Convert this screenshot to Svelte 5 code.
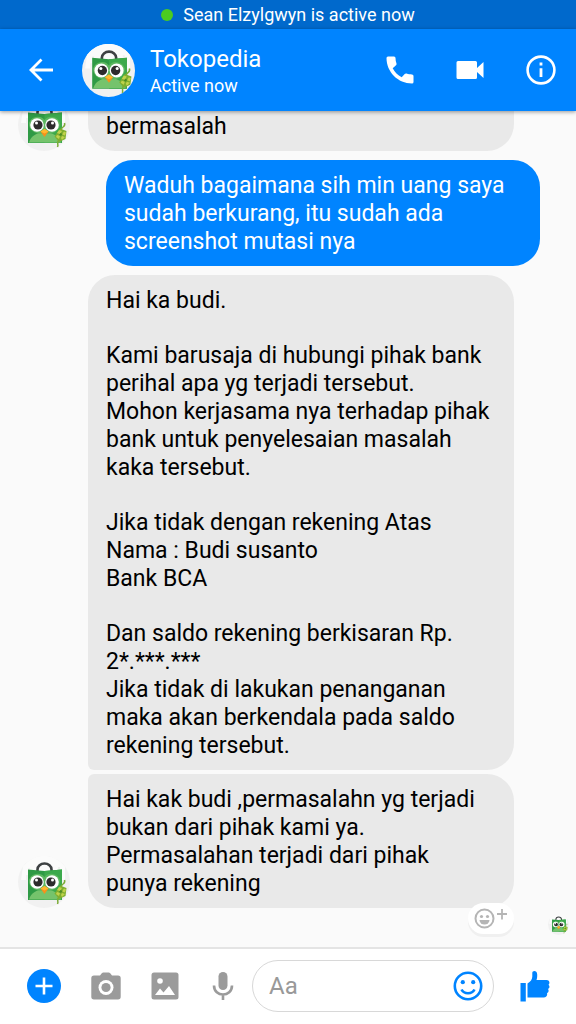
<script>
  const longMessage = [
    "Hai ka budi.",
    "Kami barusaja di hubungi pihak bank\nperihal apa yg terjadi tersebut.\nMohon kerjasama nya terhadap pihak\nbank untuk penyelesaian masalah\nkaka tersebut.",
    "Jika tidak dengan rekening Atas\nNama : Budi susanto\nBank BCA",
    "Dan saldo rekening berkisaran Rp.\n2*.***.***\nJika tidak di lakukan penanganan\nmaka akan berkendala pada saldo\nrekening tersebut."
  ];

  const messages = [
    { from: "shop", shape: "middle", avatar: true, paragraphs: ["bermasalah"] },
    {
      from: "me",
      shape: "single",
      paragraphs: ["Waduh bagaimana sih min uang saya\nsudah berkurang, itu sudah ada\nscreenshot mutasi nya"]
    },
    { from: "shop", shape: "first", paragraphs: longMessage },
    {
      from: "shop",
      shape: "last",
      avatar: true,
      react: true,
      paragraphs: ["Hai kak budi ,permasalahn yg terjadi\nbukan dari pihak kami ya.\nPermasalahan terjadi dari pihak\npunya rekening"]
    }
  ];

  let draft = $state("");
</script>

{#snippet avatar(size)}
  <svg class="avatar" width={size} height={size} viewBox="0 0 52 52" role="img" aria-label="Tokopedia">
    <circle cx="26" cy="26" r="26" fill="#f1f1f1" />
    <path d="M5 10.500A26 26 0 0 1 47 10.500V24h-3v-8h-2v-5h-2v10H12v-9h-2v7H8v5H3z" fill="#fbfbfb" />
    <path d="M19.500 15v-1.500a7 6 0 0 1 14 0V15" fill="none" stroke="#3e4143" stroke-width="2.600" />
    <path d="M10 13.500l16.500 1.500L44 13.500V44H10z" fill="#2f9a45" />
    <path d="M26.500 15L44 13.500V44H26.500z" fill="#3ca94c" />
    <path d="M11 43.500c2-7 8-10 15.500-10S41 36.500 43 43.500z" fill="#75c36c" />
    <path d="M11 24a9 9 0 0 1 15.500-3A9 9 0 0 1 42 24c.500 8-8 12-15.500 10.500C19 36 10.500 32 11 24z" fill="#5db760" />
    <circle cx="19" cy="26" r="6.800" fill="#fff" />
    <circle cx="34" cy="26" r="6.800" fill="#fff" />
    <circle cx="20" cy="26" r="4.600" fill="#2d2b2c" />
    <circle cx="33" cy="26" r="4.600" fill="#2d2b2c" />
    <circle cx="18.500" cy="24" r="1.500" fill="#fff" />
    <circle cx="34.500" cy="24" r="1.500" fill="#fff" />
    <path d="M26.500 30l4 2.500-4 5.500-4-5.500z" fill="#f6901b" />
    <path d="M26.500 30l4 2.500-4 2-4-2z" fill="#ffb92e" />
    <path d="M43 31c1-4 5-3 3.500-7M41 41c-3 3 0 4-1.500 7" fill="none" stroke="#7bab35" stroke-width="1.500" />
    <path d="M42 29.500l6.500 2.500-1 8-6.500 3-4.500-5.500z" fill="#7fae2f" />
    <path d="M41 31l3 1-2 3-3-1zM46 32.500l2 1-1 3-3-1zM39 36l3 1-1 3-3-2zM44 37l3 1-3 3-1-2z" fill="#c0d24c" />
    <path d="M42.500 34l2 1-1.500 2-2-1z" fill="#4c8a24" />
  </svg>
{/snippet}

<div class="screen">
  <div class="presence"><span class="dot"></span>Sean Elzylgwyn is active now</div>

  <header>
    <button class="back" aria-label="Back">
      <svg width="24" height="24" viewBox="0 0 24 24" fill="none" stroke="currentColor" stroke-width="2.800">
        <path d="M12.500 1.500L2 12l10.500 10.500M2 12h22" />
      </svg>
    </button>
    {@render avatar(53)}
    <div class="who">
      <h1>Tokopedia</h1>
      <p>Active now</p>
    </div>
    <nav>
      <button aria-label="Call">
        <svg width="28" height="28" viewBox="0 0 28 28" fill="currentColor">
          <path d="M2 .500h6q1.500 0 1.500 1.500 0 3 1 5.500.300 1-.500 1.800L6.700 12.300c2 4 5 7 9 9l3-3.200q.800-.800 1.800-.500c2 .700 3.500.900 5.500.900q1.500 0 1.500 1.500V26q0 1.500-1.500 1.500C12 27.500.500 16 .500 2Q.500.500 2 .500z" />
        </svg>
      </button>
      <button aria-label="Video call">
        <svg width="28" height="20" viewBox="0 0 28 20" fill="currentColor">
          <path d="M2 1h17.500Q21 1 21 2.500V8l6.500-6v16L21 12v5.500q0 1.500-1.500 1.500H2Q.500 19 .500 17.500v-15Q.500 1 2 1z" />
        </svg>
      </button>
      <button aria-label="Conversation info">
        <svg width="30" height="30" viewBox="0 0 30 30" fill="none" stroke="currentColor">
          <circle cx="15" cy="15" r="13.400" stroke-width="2.600" />
          <path d="M15 7.500v3M15 13.300V22" stroke-width="2.800" />
        </svg>
      </button>
    </nav>
  </header>

  <main>
    {#each messages as message}
      <div class="row {message.from} {message.shape}">
        {#if message.from === "shop"}
          <div class="side">
            {#if message.avatar}{@render avatar(52)}{/if}
          </div>
        {/if}
        <div class="bubble">
          {#each message.paragraphs as text}
            <p>{text}</p>
          {/each}
          {#if message.react}
            <button class="react" aria-label="Add reaction">
              <svg width="34" height="22" viewBox="0 0 34 22" fill="none" stroke="#b5b5b5">
                <circle cx="10.500" cy="11.500" r="9" stroke-width="2" />
                <circle cx="7.500" cy="9.500" r="1.600" fill="#b5b5b5" stroke="none" />
                <circle cx="13.500" cy="9.500" r="1.600" fill="#b5b5b5" stroke="none" />
                <path d="M5.500 13h10a5 4.500 0 0 1-10 0z" fill="#b5b5b5" stroke="none" />
                <path d="M28 2v10.500M23 7h10" stroke-width="1.800" />
              </svg>
            </button>
          {/if}
        </div>
      </div>
    {/each}
    <div class="seen">{@render avatar(21)}</div>
  </main>

  <footer>
    <div class="tools">
      <button aria-label="More">
        <svg width="34" height="34" viewBox="0 0 34 34">
          <circle cx="17" cy="17" r="17" fill="#0084ff" />
          <path d="M17 8.500v17M8.500 17h17" stroke="#fff" stroke-width="2.600" />
        </svg>
      </button>
      <button aria-label="Camera">
        <svg width="30" height="28" viewBox="0 0 30 28" fill="#9b9b9b">
          <path d="M3 3.500h6L11 1q.500-.500 1.300-.500h5.400q.800 0 1.300.500l2 2.500h6q2.700 0 2.700 2.700v18.600q0 2.700-2.700 2.700H3q-2.700 0-2.700-2.700V6.200Q.300 3.500 3 3.500z" />
          <circle cx="15" cy="15.500" r="7.500" fill="#fff" />
          <circle cx="15" cy="15.500" r="4.600" />
        </svg>
      </button>
      <button aria-label="Gallery">
        <svg width="28" height="28" viewBox="0 0 28 28">
          <rect x=".500" y=".500" width="27" height="27" rx="2.500" fill="#9b9b9b" />
          <circle cx="9" cy="9" r="2.800" fill="#fff" />
          <path d="M4 23l5-6.500 3.500 4 5.500-6.500 6 9z" fill="#fff" />
        </svg>
      </button>
      <button aria-label="Record voice">
        <svg width="28" height="30" viewBox="-3 0 28 30">
          <rect x="6.500" y="1" width="9" height="18" rx="4.500" fill="#9b9b9b" />
          <path d="M2 14.500c0 12 18 12 18 0M11 23v6" fill="none" stroke="#9b9b9b" stroke-width="2.600" />
        </svg>
      </button>
    </div>
    <div class="field">
      <input type="text" bind:value={draft} placeholder="Aa" aria-label="Message" />
      <button aria-label="Emoji">
        <svg width="30" height="30" viewBox="0 0 30 30" fill="none" stroke="#0084ff" stroke-width="2.600">
          <circle cx="15" cy="15" r="13.200" />
          <circle cx="9.800" cy="11.200" r="2.100" fill="#0084ff" stroke="none" />
          <circle cx="20.200" cy="11.200" r="2.100" fill="#0084ff" stroke="none" />
          <path d="M8.500 18.500c2.500 5 10.500 5 13 0" />
        </svg>
      </button>
    </div>
    <button class="like" aria-label="Send like">
      <svg width="30" height="32" viewBox="0 0 30 32" fill="#0084ff">
        <path d="M.500 13h5.300v18.500H.500z" />
        <path d="M7.500 13.500c3-2 4.800-4 4.800-7V3c0-2.500 4.700-3 4.900 1.500.100 2.500-.200 4-.700 5.500h10c3 0 3.800 3.200 2 4.700 1.500 1.300 1.200 3.300-.500 4.300 1.200 1.600.500 3.400-1 4.100.700 2-.700 4.400-3.300 4.400H7.500z" />
      </svg>
    </button>
  </footer>
</div>

<style>
  :global(body) { margin: 0; }

  .screen {
    display: flex;
    flex-direction: column;
    height: 100vh;
    background: #fafafa;
    color: #000;
    font-family: Roboto, sans-serif;
  }

  h1, p { margin: 0; font-weight: 400; }

  button {
    display: flex;
    padding: 0;
    border: none;
    background: none;
    color: inherit;
    cursor: pointer;
  }

  .avatar { display: block; flex: none; }

  .presence {
    display: flex;
    align-items: center;
    justify-content: center;
    gap: 10px;
    height: 29px;
    background: #0069cc;
    color: #fff;
    font-size: 18px;
    line-height: 30px;
  }

  .dot {
    width: 12px;
    height: 12px;
    border-radius: 50%;
    background: #4bcc1f;
  }

  header {
    position: relative;
    z-index: 1;
    display: flex;
    flex: none;
    align-items: center;
    height: 82px;
    padding: 0 20px 0 29px;
    background: #0084ff;
    color: #fff;
    box-shadow: 0 1px 4px rgba(0, 0, 0, 0.4);
  }

  .back { margin-right: 29px; }

  .who { flex: 1; margin-left: 15px; padding-top: 2px; }
  .who h1 { font-size: 24px; line-height: 30px; }
  .who p { font-size: 18px; line-height: 24px; }

  nav { display: flex; align-items: center; gap: 42px; }

  main {
    display: flex;
    flex: 1;
    flex-direction: column;
    justify-content: flex-end;
    min-height: 0;
    overflow: hidden;
  }

  .row {
    display: flex;
    flex: none;
    align-items: flex-end;
    margin-top: 9px;
  }

  .shop { padding: 0 62px 0 18px; }
  .me { padding: 0 36px 0 106px; }
  .last { margin-top: 4px; }

  .side { flex: none; width: 70px; }

  .bubble {
    position: relative;
    flex: 1;
    padding: 12px 18px 10px;
    border-radius: 27px;
    background: #e9e9e9;
    font-size: 23px;
    line-height: 28px;
    white-space: pre-line;
  }

  .me .bubble { background: #0084ff; color: #fff; }
  .bubble p + p { margin-top: 27px; }

  .first .bubble { border-bottom-left-radius: 6px; }
  .last .bubble { border-top-left-radius: 6px; }
  .middle .bubble { border-top-left-radius: 6px; border-top-right-radius: 6px; }

  .react {
    position: absolute;
    right: 0;
    bottom: -26px;
    padding: 4px 6px 5px;
    border-radius: 16px;
    background: #fff;
    box-shadow: 0 3px 0 #f0f0f0;
  }

  .seen {
    display: flex;
    flex: none;
    align-items: flex-start;
    justify-content: flex-end;
    height: 33px;
    padding: 6px 7px 0 0;
  }

  footer {
    display: flex;
    flex: none;
    align-items: center;
    height: 73px;
    padding: 0 26px 2px 27px;
    border-top: 2px solid #e4e4e4;
    background: #fff;
  }

  .tools { display: flex; align-items: center; gap: 30px; }

  .field {
    display: flex;
    flex: 1;
    align-items: center;
    min-width: 0;
    height: 50px;
    margin: 0 26px 0 15px;
    padding: 0 10px 0 16px;
    border: 1px solid #d8d8d8;
    border-radius: 26px;
  }

  input {
    flex: 1;
    min-width: 0;
    padding: 0;
    border: none;
    outline: none;
    background: none;
    color: #000;
    font: 24px/28px Roboto, sans-serif;
  }

  input::placeholder { color: #999; opacity: 1; }
</style>
